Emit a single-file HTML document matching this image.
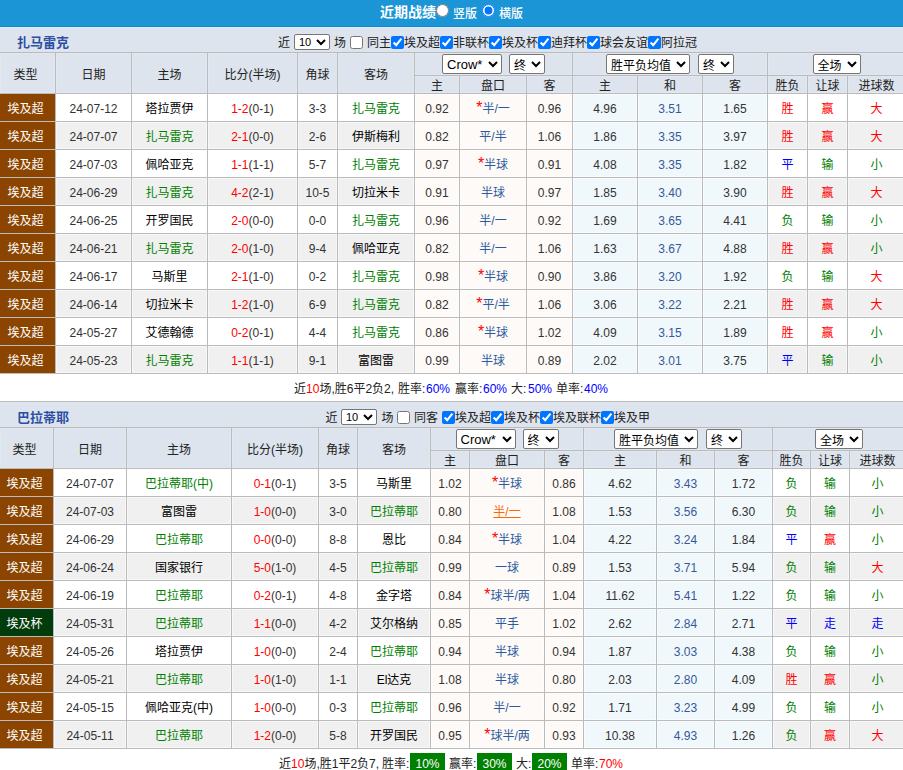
<!DOCTYPE html>
<html lang="zh-CN"><head><meta charset="utf-8"><title>近期战绩</title>
<style>
html,body{margin:0;padding:0;background:#fff;}
body{width:903px;height:770px;overflow:hidden;position:relative;font-family:"Liberation Sans","Noto Sans CJK SC",sans-serif;font-size:12px;color:#222;}
.hdr{height:26px;background:#1b95d5;border-bottom:1px solid #0c88cf;color:#fff;position:relative;}
.hdr b{position:absolute;left:380px;top:0;line-height:24px;font-size:14px;font-weight:bold;}
.hdr span{position:absolute;top:2px;line-height:24px;font-size:12px;font-weight:500;}
.hdr input{position:absolute;margin:0;width:13px;height:13px;top:4px;}
.ttl{height:24px;background:#dde4ed;position:relative;border-top:1px solid #e7ecf2;}
.ttl.t2{height:25px;border-top:1px solid #bbb;}
.ttl.t2 .f{top:1px}.ttl.t2 b{top:1px}
.ttl b{position:absolute;left:17px;top:0;line-height:29px;font-size:13px;color:#2b50a2;font-weight:bold;}
.ttl .f{position:absolute;top:0;left:0;height:24px;line-height:30px;white-space:nowrap;}
.ttl .f>*{position:absolute;top:0;}
.ttl .f input{margin:0;width:13px;height:13px;top:8px;}
.ttl .f select{top:6px;}
select{font-family:"Liberation Sans","Noto Sans CJK SC",sans-serif;color:#000;background:#fff;border:1px solid #767676;border-radius:2px;margin:0;box-sizing:border-box;}
.ttl select{width:36px;height:16px;font-size:11px;padding:0;}
table{border-collapse:separate;border-spacing:0;table-layout:fixed;width:906px;border-top:1px solid #bbb;}
td,th{border-right:1px solid #bbb;border-bottom:1px solid #bbb;padding:0;text-align:center;font-weight:normal;box-sizing:border-box;white-space:nowrap;overflow:hidden;}
th{background:#dde4ed;color:#222;box-shadow:inset 0 0 0 1px rgba(255,255,255,.15);}
td{box-shadow:inset 0 0 0 1px rgba(255,255,255,.5);}
tr.h1 th{height:41px;}
tr.h1 th.sel{height:23px;}
tr.h2 th{height:18px;line-height:13px;padding-top:4px;vertical-align:top;}
th select{height:20px;font-size:12px;padding:3px 0 0 0;vertical-align:middle;}
th select.s60{font-size:13px;padding:0;}
.s60{width:60px}.s36{width:36px}.s84{width:84px}.s48{width:48px}.ml{margin-left:7px}.ml8{margin-left:8px}
td{height:28px;line-height:23px;padding-top:4px;vertical-align:top;}
tr.o td{background:#fff;}
tr.e td{background:#f0f0f0;}
tr td.lg{background:#8b4500;color:#fff;box-shadow:none;}
tr td.lg2{background:#023b0c;color:#fff;box-shadow:none;}
td:first-child,tr.h1 th:first-child{padding-right:4px;}
td.dt{color:#333;}
td.tm{color:#000;}
td.g{color:#008000;}
td.sc{color:#333;}
td.sc b{color:#f00;font-weight:normal;}
tr td.od{background:#fdfaf7;color:#333;}
tr td.hc{color:#2c5aa0;}
tr td.hv{color:#f60;}
td.hc i{color:#f00;font-style:normal;font-size:16px;line-height:0;}
tr td.eu{background:#f1f8fc;color:#333;}
tr td.dr{color:#35589a;}
td.r{color:#f00;}td.b{color:#00f;}
.sum{height:27px;line-height:31px;text-align:center;background:#fff;white-space:nowrap;position:relative;}
.sum span{position:absolute;top:0;}
.sum i{font-style:normal}.sum .r{color:#f00}.sum .bl{color:#00f}
.sum .gb{background:#008000;color:#fff;top:4px;height:20px;line-height:22px;width:35px;text-align:center;font-size:12px;}
#w{width:903px;height:770px;overflow:hidden;position:relative;}
</style></head><body><div id="w">
<div class="hdr"><b>近期战绩</b><input type="radio" name="v" style="left:436px"><span style="left:453px">竖版</span><input type="radio" name="v" checked style="left:482px"><span style="left:499px">横版</span></div>
<div class="ttl"><b>扎马雷克</b><div class="f">
<span style="left:278px">近</span><select style="left:294px"><option>10</option></select><span style="left:334px">场</span>
<input type="checkbox" style="left:350px"><span style="left:367px">同主</span>
<input type="checkbox" checked style="left:391px"><span style="left:404px">埃及超</span>
<input type="checkbox" checked style="left:440px"><span style="left:453px">非联杯</span>
<input type="checkbox" checked style="left:489px"><span style="left:502px">埃及杯</span>
<input type="checkbox" checked style="left:538px"><span style="left:551px">迪拜杯</span>
<input type="checkbox" checked style="left:587px"><span style="left:600px">球会友谊</span>
<input type="checkbox" checked style="left:648px"><span style="left:661px">阿拉冠</span>
</div></div>
<table><colgroup><col style="width:56px"><col style="width:76px"><col style="width:76px"><col style="width:90px"><col style="width:40px"><col style="width:77px"><col style="width:45px"><col style="width:67px"><col style="width:46px"><col style="width:65px"><col style="width:65px"><col style="width:65px"><col style="width:40px"><col style="width:40px"><col style="width:58px"></colgroup>
<tr class="h1"><th rowspan="2">类型</th><th rowspan="2">日期</th><th rowspan="2">主场</th><th rowspan="2">比分(半场)</th><th rowspan="2">角球</th><th rowspan="2">客场</th>
<th colspan="3" class="sel"><select class="s60"><option>Crow*</option></select><select class="s36 ml"><option>终</option></select></th>
<th colspan="3" class="sel"><select class="s84"><option>胜平负均值</option></select><select class="s36 ml8"><option>终</option></select></th>
<th colspan="3" class="sel"><select class="s48"><option>全场</option></select></th></tr>
<tr class="h2"><th>主</th><th>盘口</th><th>客</th><th>主</th><th>和</th><th>客</th><th>胜负</th><th>让球</th><th>进球数</th></tr>
<tr class="o"><td class="lg">埃及超</td><td class="dt">24-07-12</td><td class="tm">塔拉贾伊</td><td class="sc"><b>1-2</b>(0-1)</td><td class="dt">3-3</td><td class="g">扎马雷克</td><td class="od">0.92</td><td class="od hc"><i class="st">*</i>半/一</td><td class="od">0.96</td><td class="eu">4.96</td><td class="eu dr">3.51</td><td class="eu">1.65</td><td class="r">胜</td><td class="r">赢</td><td class="r">大</td></tr>
<tr class="e"><td class="lg">埃及超</td><td class="dt">24-07-07</td><td class="g">扎马雷克</td><td class="sc"><b>2-1</b>(0-0)</td><td class="dt">2-6</td><td class="tm">伊斯梅利</td><td class="od">0.82</td><td class="od hc">平/半</td><td class="od">1.06</td><td class="eu">1.86</td><td class="eu dr">3.35</td><td class="eu">3.97</td><td class="r">胜</td><td class="r">赢</td><td class="r">大</td></tr>
<tr class="o"><td class="lg">埃及超</td><td class="dt">24-07-03</td><td class="tm">佩哈亚克</td><td class="sc"><b>1-1</b>(1-1)</td><td class="dt">5-7</td><td class="g">扎马雷克</td><td class="od">0.97</td><td class="od hc"><i class="st">*</i>半球</td><td class="od">0.91</td><td class="eu">4.08</td><td class="eu dr">3.35</td><td class="eu">1.82</td><td class="b">平</td><td class="g">输</td><td class="g">小</td></tr>
<tr class="e"><td class="lg">埃及超</td><td class="dt">24-06-29</td><td class="g">扎马雷克</td><td class="sc"><b>4-2</b>(2-1)</td><td class="dt">10-5</td><td class="tm">切拉米卡</td><td class="od">0.91</td><td class="od hc">半球</td><td class="od">0.97</td><td class="eu">1.85</td><td class="eu dr">3.40</td><td class="eu">3.90</td><td class="r">胜</td><td class="r">赢</td><td class="r">大</td></tr>
<tr class="o"><td class="lg">埃及超</td><td class="dt">24-06-25</td><td class="tm">开罗国民</td><td class="sc"><b>2-0</b>(0-0)</td><td class="dt">0-0</td><td class="g">扎马雷克</td><td class="od">0.96</td><td class="od hc">半/一</td><td class="od">0.92</td><td class="eu">1.69</td><td class="eu dr">3.65</td><td class="eu">4.41</td><td class="g">负</td><td class="g">输</td><td class="g">小</td></tr>
<tr class="e"><td class="lg">埃及超</td><td class="dt">24-06-21</td><td class="g">扎马雷克</td><td class="sc"><b>2-0</b>(1-0)</td><td class="dt">9-4</td><td class="tm">佩哈亚克</td><td class="od">0.82</td><td class="od hc">半/一</td><td class="od">1.06</td><td class="eu">1.63</td><td class="eu dr">3.67</td><td class="eu">4.88</td><td class="r">胜</td><td class="r">赢</td><td class="g">小</td></tr>
<tr class="o"><td class="lg">埃及超</td><td class="dt">24-06-17</td><td class="tm">马斯里</td><td class="sc"><b>2-1</b>(1-0)</td><td class="dt">0-2</td><td class="g">扎马雷克</td><td class="od">0.98</td><td class="od hc"><i class="st">*</i>半球</td><td class="od">0.90</td><td class="eu">3.86</td><td class="eu dr">3.20</td><td class="eu">1.92</td><td class="g">负</td><td class="g">输</td><td class="r">大</td></tr>
<tr class="e"><td class="lg">埃及超</td><td class="dt">24-06-14</td><td class="tm">切拉米卡</td><td class="sc"><b>1-2</b>(1-0)</td><td class="dt">6-9</td><td class="g">扎马雷克</td><td class="od">0.82</td><td class="od hc"><i class="st">*</i>平/半</td><td class="od">1.06</td><td class="eu">3.06</td><td class="eu dr">3.22</td><td class="eu">2.21</td><td class="r">胜</td><td class="r">赢</td><td class="r">大</td></tr>
<tr class="o"><td class="lg">埃及超</td><td class="dt">24-05-27</td><td class="tm">艾德翰德</td><td class="sc"><b>0-2</b>(0-1)</td><td class="dt">4-4</td><td class="g">扎马雷克</td><td class="od">0.86</td><td class="od hc"><i class="st">*</i>半球</td><td class="od">1.02</td><td class="eu">4.09</td><td class="eu dr">3.15</td><td class="eu">1.89</td><td class="r">胜</td><td class="r">赢</td><td class="g">小</td></tr>
<tr class="e"><td class="lg">埃及超</td><td class="dt">24-05-23</td><td class="g">扎马雷克</td><td class="sc"><b>1-1</b>(1-1)</td><td class="dt">9-1</td><td class="tm">富图雷</td><td class="od">0.99</td><td class="od hc">半球</td><td class="od">0.89</td><td class="eu">2.02</td><td class="eu dr">3.01</td><td class="eu">3.75</td><td class="b">平</td><td class="g">输</td><td class="g">小</td></tr>
</table>
<div class="sum"><span style="left:294px">近<i class="r">10</i>场,胜6平2负2,</span><span style="left:398px">胜率:</span><span class="bl" style="left:426px">60%</span><span style="left:455px">赢率:</span><span class="bl" style="left:483px">60%</span><span style="left:511px">大:</span><span class="bl" style="left:528px">50%</span><span style="left:556px">单率:</span><span class="bl" style="left:584px">40%</span></div>
<div class="ttl t2"><b>巴拉蒂耶</b><div class="f">
<span style="left:325.5px">近</span><select style="left:341px"><option>10</option></select><span style="left:381.5px">场</span>
<input type="checkbox" style="left:397px"><span style="left:414px">同客</span>
<input type="checkbox" checked style="left:442px"><span style="left:455px">埃及超</span>
<input type="checkbox" checked style="left:491px"><span style="left:504px">埃及杯</span>
<input type="checkbox" checked style="left:540px"><span style="left:553px">埃及联杯</span>
<input type="checkbox" checked style="left:601px"><span style="left:614px">埃及甲</span>
</div></div>
<table><colgroup><col style="width:54px"><col style="width:73px"><col style="width:105px"><col style="width:87px"><col style="width:39px"><col style="width:73px"><col style="width:39px"><col style="width:75px"><col style="width:39px"><col style="width:73px"><col style="width:58px"><col style="width:58px"><col style="width:38px"><col style="width:39px"><col style="width:56px"></colgroup>
<tr class="h1"><th rowspan="2">类型</th><th rowspan="2">日期</th><th rowspan="2">主场</th><th rowspan="2">比分(半场)</th><th rowspan="2">角球</th><th rowspan="2">客场</th>
<th colspan="3" class="sel"><select class="s60"><option>Crow*</option></select><select class="s36 ml"><option>终</option></select></th>
<th colspan="3" class="sel"><select class="s84"><option>胜平负均值</option></select><select class="s36 ml8"><option>终</option></select></th>
<th colspan="3" class="sel"><select class="s48"><option>全场</option></select></th></tr>
<tr class="h2"><th>主</th><th>盘口</th><th>客</th><th>主</th><th>和</th><th>客</th><th>胜负</th><th>让球</th><th>进球数</th></tr>
<tr class="o"><td class="lg">埃及超</td><td class="dt">24-07-07</td><td class="g">巴拉蒂耶(中)</td><td class="sc"><b>0-1</b>(0-1)</td><td class="dt">3-5</td><td class="tm">马斯里</td><td class="od">1.02</td><td class="od hc"><i class="st">*</i>半球</td><td class="od">0.86</td><td class="eu">4.62</td><td class="eu dr">3.43</td><td class="eu">1.72</td><td class="g">负</td><td class="g">输</td><td class="g">小</td></tr>
<tr class="e"><td class="lg">埃及超</td><td class="dt">24-07-03</td><td class="tm">富图雷</td><td class="sc"><b>1-0</b>(0-0)</td><td class="dt">3-0</td><td class="g">巴拉蒂耶</td><td class="od">0.80</td><td class="od hc hv"><u>半/一</u></td><td class="od">1.08</td><td class="eu">1.53</td><td class="eu dr">3.56</td><td class="eu">6.30</td><td class="g">负</td><td class="g">输</td><td class="g">小</td></tr>
<tr class="o"><td class="lg">埃及超</td><td class="dt">24-06-29</td><td class="g">巴拉蒂耶</td><td class="sc"><b>0-0</b>(0-0)</td><td class="dt">8-8</td><td class="tm">恩比</td><td class="od">0.84</td><td class="od hc"><i class="st">*</i>半球</td><td class="od">1.04</td><td class="eu">4.22</td><td class="eu dr">3.24</td><td class="eu">1.84</td><td class="b">平</td><td class="r">赢</td><td class="g">小</td></tr>
<tr class="e"><td class="lg">埃及超</td><td class="dt">24-06-24</td><td class="tm">国家银行</td><td class="sc"><b>5-0</b>(1-0)</td><td class="dt">4-5</td><td class="g">巴拉蒂耶</td><td class="od">0.99</td><td class="od hc">一球</td><td class="od">0.89</td><td class="eu">1.53</td><td class="eu dr">3.71</td><td class="eu">5.94</td><td class="g">负</td><td class="g">输</td><td class="r">大</td></tr>
<tr class="o"><td class="lg">埃及超</td><td class="dt">24-06-19</td><td class="g">巴拉蒂耶</td><td class="sc"><b>0-2</b>(0-1)</td><td class="dt">4-8</td><td class="tm">金字塔</td><td class="od">0.84</td><td class="od hc"><i class="st">*</i>球半/两</td><td class="od">1.04</td><td class="eu">11.62</td><td class="eu dr">5.41</td><td class="eu">1.22</td><td class="g">负</td><td class="g">输</td><td class="g">小</td></tr>
<tr class="e"><td class="lg2">埃及杯</td><td class="dt">24-05-31</td><td class="g">巴拉蒂耶</td><td class="sc"><b>1-1</b>(0-0)</td><td class="dt">4-2</td><td class="tm">艾尔格纳</td><td class="od">0.85</td><td class="od hc">平手</td><td class="od">1.02</td><td class="eu">2.62</td><td class="eu dr">2.84</td><td class="eu">2.71</td><td class="b">平</td><td class="b">走</td><td class="b">走</td></tr>
<tr class="o"><td class="lg">埃及超</td><td class="dt">24-05-26</td><td class="tm">塔拉贾伊</td><td class="sc"><b>1-0</b>(0-0)</td><td class="dt">2-4</td><td class="g">巴拉蒂耶</td><td class="od">0.94</td><td class="od hc">半球</td><td class="od">0.94</td><td class="eu">1.87</td><td class="eu dr">3.03</td><td class="eu">4.38</td><td class="g">负</td><td class="g">输</td><td class="g">小</td></tr>
<tr class="e"><td class="lg">埃及超</td><td class="dt">24-05-21</td><td class="g">巴拉蒂耶</td><td class="sc"><b>1-0</b>(1-0)</td><td class="dt">1-1</td><td class="tm">El达克</td><td class="od">1.08</td><td class="od hc">半球</td><td class="od">0.80</td><td class="eu">2.03</td><td class="eu dr">2.80</td><td class="eu">4.09</td><td class="r">胜</td><td class="r">赢</td><td class="g">小</td></tr>
<tr class="o"><td class="lg">埃及超</td><td class="dt">24-05-15</td><td class="tm">佩哈亚克(中)</td><td class="sc"><b>1-0</b>(0-0)</td><td class="dt">0-3</td><td class="g">巴拉蒂耶</td><td class="od">0.96</td><td class="od hc">半/一</td><td class="od">0.92</td><td class="eu">1.71</td><td class="eu dr">3.23</td><td class="eu">4.99</td><td class="g">负</td><td class="g">输</td><td class="g">小</td></tr>
<tr class="e"><td class="lg">埃及超</td><td class="dt">24-05-11</td><td class="g">巴拉蒂耶</td><td class="sc"><b>1-2</b>(0-0)</td><td class="dt">5-8</td><td class="tm">开罗国民</td><td class="od">0.95</td><td class="od hc"><i class="st">*</i>球半/两</td><td class="od">0.93</td><td class="eu">10.38</td><td class="eu dr">4.93</td><td class="eu">1.26</td><td class="g">负</td><td class="r">赢</td><td class="r">大</td></tr>
</table>
<div class="sum"><span style="left:279px">近<i class="r">10</i>场,胜1平2负7,</span><span style="left:382px">胜率:</span><span class="gb" style="left:410px">10%</span><span style="left:449px">赢率:</span><span class="gb" style="left:477px">30%</span><span style="left:516px">大:</span><span class="gb" style="left:532px">20%</span><span style="left:571px">单率:</span><span class="r" style="left:599px">70%</span></div>
</div></body></html>
